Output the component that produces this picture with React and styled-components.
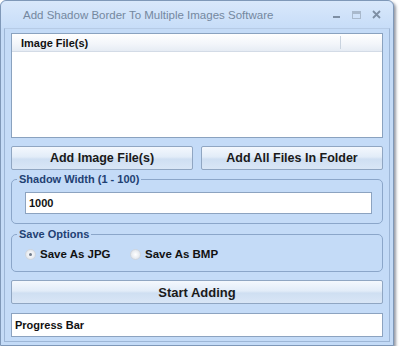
import React from "react";
import styled, { createGlobalStyle } from "styled-components";

const Global = createGlobalStyle`
  html, body { margin: 0; padding: 0; background: #fff; }
  body { font-family: "Liberation Sans", Arial, sans-serif; }
`;

const Window = styled.div`
  width: 392px;
  height: 344px;
  border: 1px solid #7f98b8;
  border-radius: 6px 6px 0 0;
  background: #c4dbf7;
  box-shadow: 2px 2px 3px rgba(60, 70, 90, 0.55);
  display: flex;
  flex-direction: column;
`;

const TitleBar = styled.div`
  height: 27px;
  display: flex;
  align-items: center;
  padding: 0 10px 0 22px;
  background: linear-gradient(#d9e8fb, #c7ddf8);
  border-radius: 6px 6px 0 0;
`;

const Title = styled.div`
  flex: 1;
  font-size: 11.5px;
  color: #74889f;
`;

const Controls = styled.div`
  display: flex;
  align-items: center;
  gap: 8px;
`;

const Client = styled.div`
  flex: 1;
  margin: 0 3px 3px 3px;
  border: 1px solid #9db6d6;
  border-top-color: #b6cbe6;
  padding: 4px 6px 0 6px;
  display: flex;
  flex-direction: column;
`;

const ListBox = styled.div`
  height: 103px;
  background: #fff;
  border: 1px solid #8aa2bf;
  display: flex;
  flex-direction: column;
`;

const ListHeader = styled.div`
  height: 17px;
  display: flex;
  background: linear-gradient(#ffffff, #f2f5fa 60%, #e6ecf4);
  border-bottom: 1px solid #d3dbe6;
`;

const HeaderCell = styled.div`
  width: ${p => p.$w};
  padding-left: 9px;
  display: flex;
  align-items: center;
  font-weight: bold;
  font-size: 11px;
  color: #111;
  border-right: ${p => (p.$divider ? "1px solid #c9d3df" : "none")};
  margin: 2px 0;
`;

const ButtonRow = styled.div`
  display: flex;
  gap: 8px;
  margin-top: 8px;
`;

const Button = styled.button`
  flex: 1;
  height: 24px;
  padding: 0;
  border: 1px solid #90a6c2;
  border-radius: 2px;
  background: linear-gradient(#f4f8fd 0%, #e2ecf8 45%, #cfdff2 55%, #d9e6f6 100%);
  font-family: "Liberation Sans", Arial, sans-serif;
  font-weight: bold;
  font-size: ${p => (p.$big ? "13px" : "12.5px")};
  color: #1a1a1a;
`;

const GroupBox = styled.div`
  margin-top: ${p => p.$top}px;
  height: ${p => p.$h}px;
  border: 1px solid #8ba6c9;
  border-radius: 5px;
  display: flex;
  flex-direction: column;
`;

const Legend = styled.span`
  align-self: flex-start;
  margin: -7px 0 0 5px;
  padding: 0 2px;
  line-height: 13px;
  background: #c4dbf7;
  font-weight: bold;
  font-size: 11px;
  color: #1f4173;
`;

const GroupBody = styled.div`
  flex: 1;
  display: flex;
  align-items: center;
  padding: 0 10px 0 13px;
`;

const TextInput = styled.div`
  flex: 1;
  height: 20px;
  margin-top: -3px;
  background: #fff;
  border: 1px solid #8ca3c0;
  display: flex;
  align-items: center;
  padding-left: 3px;
  font-weight: bold;
  font-size: 11px;
  color: #111;
`;

const Radio = styled.label`
  display: flex;
  align-items: center;
  gap: 4px;
  width: ${p => p.$w}px;
  margin-top: -4px;
  font-weight: bold;
  font-size: 11.5px;
  color: #111;
`;

const Dot = styled.span`
  width: 9px;
  height: 9px;
  border-radius: 50%;
  background: radial-gradient(circle, #ffffff 0%, #e4e8ee 70%, #c8cfd9 100%);
  border: 1px solid #d0d6de;
  position: relative;
  &::after {
    content: "";
    display: ${p => (p.$on ? "block" : "none")};
    position: absolute;
    left: 3px;
    top: 3px;
    width: 3px;
    height: 3px;
    border-radius: 50%;
    background: #6f7b8a;
  }
`;

const Progress = styled.div`
  height: 22px;
  margin-top: 9px;
  background: #fff;
  border: 1px solid #8ca3c0;
  display: flex;
  align-items: center;
  padding-left: 3px;
  font-weight: bold;
  font-size: 11px;
  color: #111;
`;

const WinIcon = ({ kind }) => (
  <svg width="12" height="10" viewBox="0 0 12 10">
    {kind === "min" && <rect x="2" y="6" width="7" height="2" fill="#7e8fa4" />}
    {kind === "max" && (
      <g fill="none" stroke="#a9b9cc">
        <rect x="1.5" y="1.5" width="8" height="7" />
        <line x1="1.5" y1="3" x2="9.5" y2="3" strokeWidth="2" />
      </g>
    )}
    {kind === "close" && (
      <path d="M2 1 L9 8 M9 1 L2 8" stroke="#7e8fa4" strokeWidth="1.8" />
    )}
  </svg>
);

export default function App() {
  return (
    <>
      <Global />
      <Window>
        <TitleBar>
          <Title>Add Shadow Border To Multiple Images Software</Title>
          <Controls>
            <WinIcon kind="min" />
            <WinIcon kind="max" />
            <WinIcon kind="close" />
          </Controls>
        </TitleBar>
        <Client>
          <ListBox>
            <ListHeader>
              <HeaderCell $w="319px" $divider>Image File(s)</HeaderCell>
              <HeaderCell $w="auto" />
            </ListHeader>
          </ListBox>
          <ButtonRow>
            <Button>Add Image File(s)</Button>
            <Button>Add All Files In Folder</Button>
          </ButtonRow>
          <GroupBox $top={9} $h={43}>
            <Legend>Shadow Width (1 - 100)</Legend>
            <GroupBody>
              <TextInput>1000</TextInput>
            </GroupBody>
          </GroupBox>
          <GroupBox $top={10} $h={36}>
            <Legend>Save Options</Legend>
            <GroupBody>
              <Radio $w={105}><Dot $on />Save As JPG</Radio>
              <Radio $w={120}><Dot />Save As BMP</Radio>
            </GroupBody>
          </GroupBox>
          <ButtonRow>
            <Button $big>Start Adding</Button>
          </ButtonRow>
          <Progress>Progress Bar</Progress>
        </Client>
      </Window>
    </>
  );
}
